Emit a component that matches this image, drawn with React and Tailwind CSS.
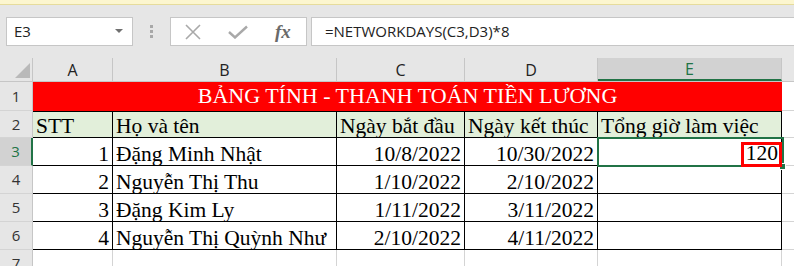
import React from "react";

const UI = { fontFamily: '"Open Sans", "Noto Sans", sans-serif' };
const SERIF = { fontFamily: '"Liberation Serif", "Times New Roman", serif' };

const COLS = [80, 224, 128, 133, 184];
const LETTERS = ["A", "B", "C", "D", "E"];

const TITLE = "B\u1EA2NG T\u00CDNH - THANH TO\u00C1N TI\u1EC0N L\u01AF\u01A0NG";
const HEAD = [
  "STT",
  "H\u1ECD v\u00E0 t\u00EAn",
  "Ng\u00E0y b\u1EAFt \u0111\u1EA7u",
  "Ng\u00E0y k\u1EBFt th\u00FAc",
  "T\u1ED5ng gi\u1EDD l\u00E0m vi\u1EC7c",
];
const DATA = [
  ["1", "\u0110\u1EB7ng Minh Nh\u1EADt", "10/8/2022", "10/30/2022"],
  ["2", "Nguy\u1EC5n Th\u1ECB Thu", "1/10/2022", "2/10/2022"],
  ["3", "\u0110\u1EB7ng Kim Ly", "1/11/2022", "3/11/2022"],
  ["4", "Nguy\u1EC5n Th\u1ECB Qu\u1EF3nh Nh\u01B0", "2/10/2022", "4/11/2022"],
];

function RowHead({ n, h, selected }) {
  return (
    <div
      className={
        "w-[33px] shrink-0 flex items-center justify-center text-[15px] border-b border-b-[#d4d4d4] " +
        (selected
          ? "bg-[#d2d2d2] text-[#217346] border-r-2 border-r-[#217346]"
          : "bg-[#e6e6e6] text-[#333] border-r border-r-[#c6c6c6]")
      }
      style={{ ...UI, height: h }}
    >
      {n}
    </div>
  );
}

function Cell({ w, h, children, className = "" }) {
  return (
    <div
      className={"shrink-0 flex items-end overflow-hidden whitespace-nowrap " + className}
      style={{ width: w, height: h }}
    >
      {children}
    </div>
  );
}

export default function App() {
  return (
    <div className="w-[794px] h-[266px] overflow-hidden bg-white relative">
      {/* message bar strip */}
      <div className="h-[5px] bg-[#fcf6cf] border-b border-[#e6dc9c]" />
      {/* formula bar area */}
      <div className="h-[53px] bg-[#e6e6e6] flex items-start pt-[12px] pl-[6px]">
        <div className="w-[127px] h-[29px] bg-white border border-[#c6c6c6] flex items-center justify-between pl-[7px] pr-[9px]">
          <span className="text-[15px] text-[#222]" style={UI}>E3</span>
          <svg width="8" height="5" viewBox="0 0 8 5">
            <polygon points="0,0 8,0 4,4" fill="#707070" />
          </svg>
        </div>
        <div className="w-[37px] h-[29px] flex flex-col items-center justify-center gap-[2px]">
          <div className="w-[3px] h-[3px] bg-[#a8a8a8]" />
          <div className="w-[3px] h-[3px] bg-[#a8a8a8]" />
          <div className="w-[3px] h-[3px] bg-[#a8a8a8]" />
        </div>
        <div className="w-[137px] h-[29px] bg-white border border-[#c6c6c6] flex items-center">
          <svg width="18" height="18" viewBox="0 0 18 18" className="ml-[13px]">
            <path d="M2 2 L16 16 M16 2 L2 16" stroke="#a9a9a9" strokeWidth="1.6" fill="none" />
          </svg>
          <svg width="20" height="14" viewBox="0 0 20 14" className="ml-[26px]">
            <path d="M1 7 L7 12.5 L19 1.5" stroke="#a9a9a9" strokeWidth="2.4" fill="none" />
          </svg>
          <span
            className="ml-[27px] italic text-[19px] text-[#6a6a6a] leading-none"
            style={{ ...SERIF, fontWeight: 600 }}
          >
            fx
          </span>
        </div>
        <div className="ml-[4px] flex-1 h-[29px] bg-white border border-[#c6c6c6] border-r-0 flex items-center pl-[13px]">
          <span className="text-[15px] text-[#222]" style={UI}>=NETWORKDAYS(C3,D3)*8</span>
        </div>
      </div>

      {/* column headers */}
      <div className="flex h-[24px] bg-[#e6e6e6] border-b border-[#c6c6c6]">
        <div className="w-[33px] shrink-0 relative border-r border-[#c6c6c6]">
          <svg width="33" height="23" viewBox="0 0 33 23" className="absolute left-0 top-0">
            <polygon points="15,20 30,20 30,5" fill="#b9b9b9" />
          </svg>
        </div>
        {COLS.map((w, i) => (
          <div
            key={i}
            className={
              "shrink-0 flex items-center justify-center text-[16px] " +
              (i === 4
                ? "bg-[#d2d2d2] text-[#217346] border-b-2 border-[#217346] border-r border-r-[#c6c6c6]"
                : "text-[#222] border-r border-[#c6c6c6]")
            }
            style={{ ...UI, width: w }}
          >
            {LETTERS[i]}
          </div>
        ))}
        <div className="flex-1" />
      </div>

      {/* row 1 */}
      <div className="flex">
        <RowHead n="1" h={29} />
        <div
          className="w-[749px] h-[29px] shrink-0 bg-[#ff0000] text-white text-[22px] flex items-end justify-center pb-[4px] leading-[22px] whitespace-nowrap"
          style={SERIF}
        >
          {TITLE}
        </div>
        <div className="flex-1 h-[29px] border-b border-[#d4d4d4]" />
      </div>

      {/* row 2 */}
      <div className="flex">
        <RowHead n="2" h={27} />
        {HEAD.map((t, i) => (
          <Cell
            key={i}
            w={COLS[i]}
            h={27}
            className="bg-[#e2efda] border-r border-b border-black border-t text-[21.5px] leading-[21px] text-black pl-[3px]"
          >
            <span style={SERIF}>{t}</span>
          </Cell>
        ))}
        <div className="flex-1 h-[27px] border-b border-[#d4d4d4]" />
      </div>

      {/* data rows */}
      {DATA.map((r, ri) => (
        <div className="flex" key={ri}>
          <RowHead n={String(ri + 3)} h={28} selected={ri === 0} />
          {[0, 1, 2, 3, 4].map((ci) => (
            <Cell
              key={ci}
              w={COLS[ci]}
              h={28}
              className={
                "border-r border-b border-black text-[21.5px] leading-[21px] text-black " +
                (ci === 1 ? "justify-start pl-[3px]" : "justify-end pr-[3px]")
              }
            >
              <span style={SERIF}>{ci === 4 ? "" : r[ci]}</span>
            </Cell>
          ))}
          <div className="flex-1 h-[28px] border-b border-[#d4d4d4]" />
        </div>
      ))}

      {/* row 7 */}
      <div className="flex">
        <RowHead n="7" h={28} />
        {COLS.map((w, i) => (
          <div key={i} className="shrink-0 h-[28px] border-r border-[#d4d4d4]" style={{ width: w }} />
        ))}
      </div>

      {/* E3 selection */}
      <div className="absolute left-[597px] top-[137px] w-[187px] h-[30px] border-2 border-[#217346]" />
      <div className="absolute left-[779px] top-[163px] w-[7px] h-[7px] bg-[#217346] border border-white" />
      {/* 120 highlighted */}
      <div className="absolute left-[741px] top-[142px] w-[41px] h-[25px] border-[3px] border-[#ff0000] bg-white flex items-end justify-end pr-[1px]">
        <span className="text-[21.5px] leading-[21px] text-black" style={SERIF}>120</span>
      </div>
    </div>
  );
}
